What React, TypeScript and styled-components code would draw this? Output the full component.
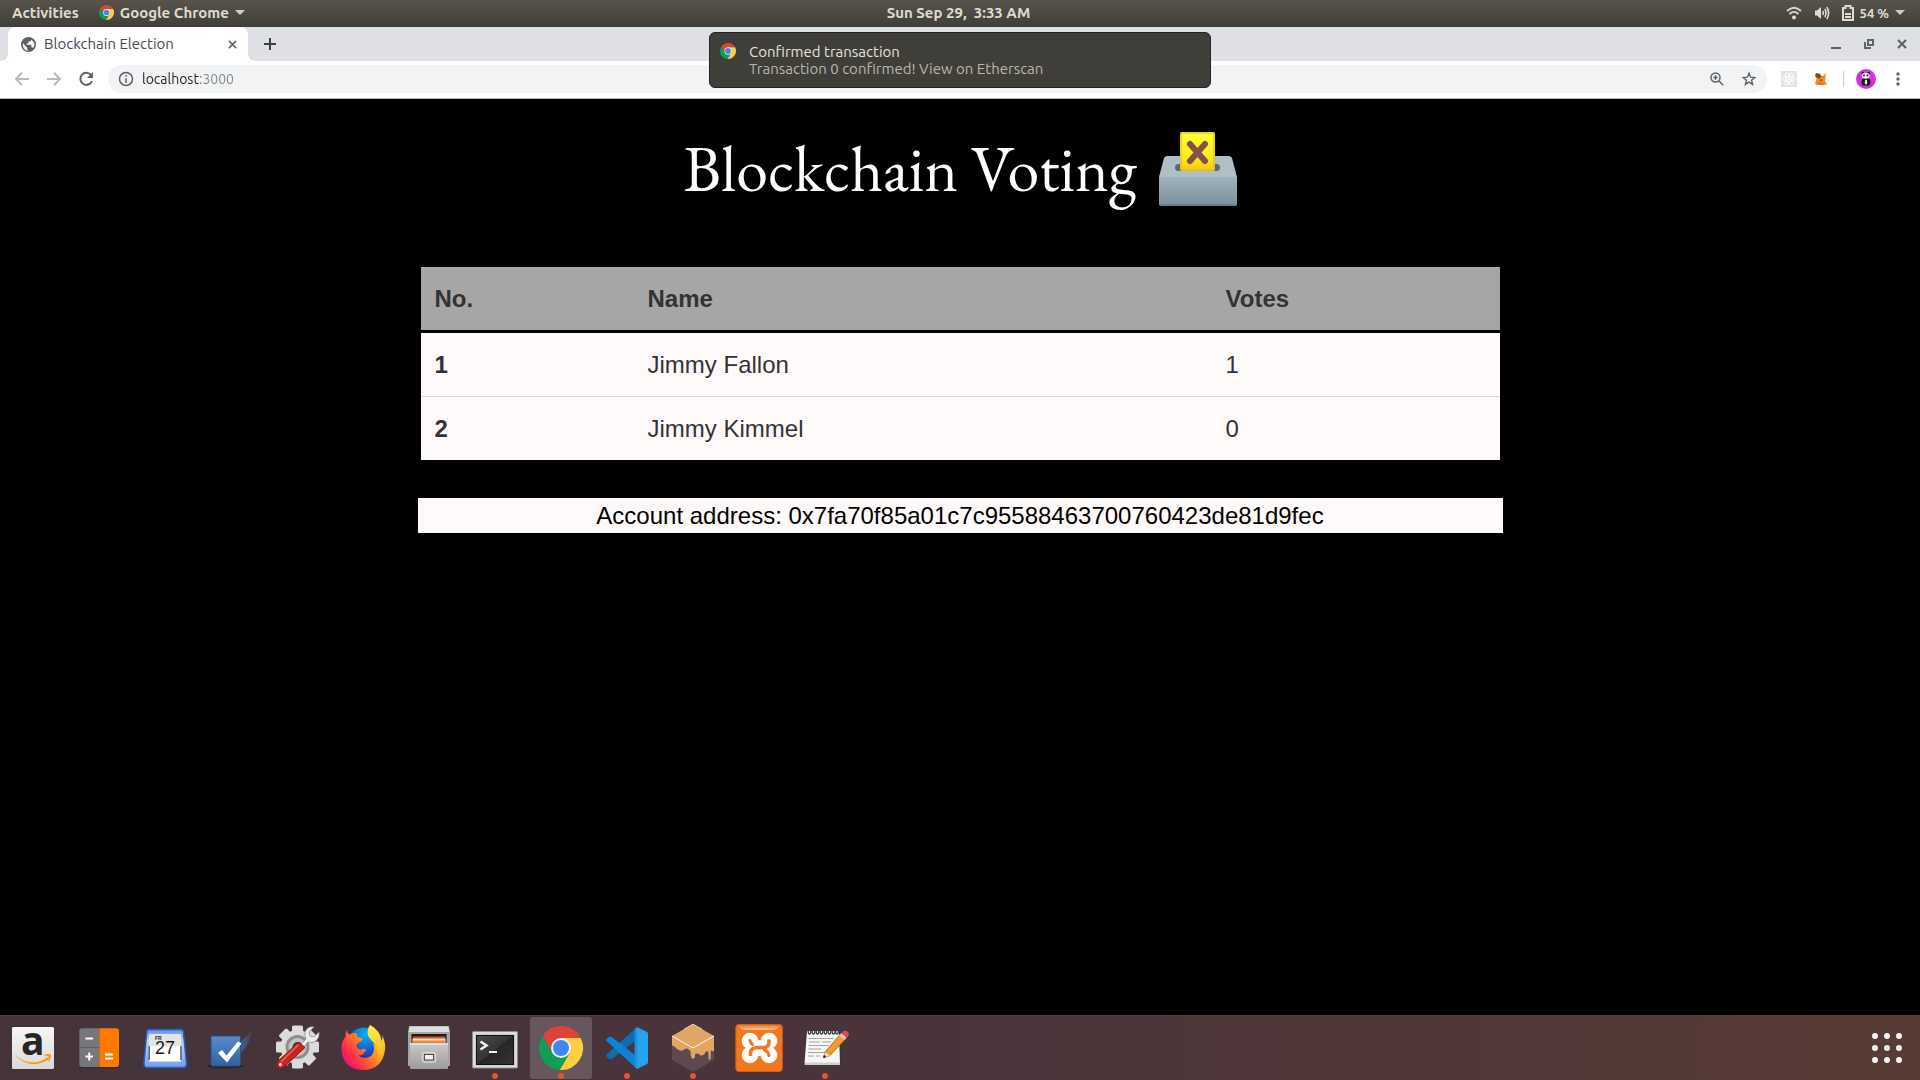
import React from "react";
import styled, { createGlobalStyle } from "styled-components";

const GlobalStyle = createGlobalStyle`
  *, *::before, *::after { box-sizing: border-box; }
  html, body, #root { height: 100%; margin: 0; }
  body { background: #000; overflow: hidden; }
  button, input { font: inherit; color: inherit; border: 0; padding: 0; margin: 0; background: none; }
  svg { display: block; flex: none; overflow: visible; }
`;

const uiFont = `"Ubuntu", "Noto Sans", "Open Sans", sans-serif`;

const Desktop = styled.div`
  min-height: 100vh;
  display: flex;
  flex-direction: column;
  font-family: ${uiFont};
`;

/* ---------- system bar ---------- */

const SystemBar = styled.header`
  height: 27px;
  flex: none;
  display: grid;
  grid-template-columns: 1fr auto 1fr;
  align-items: center;
  padding: 0 15px 2px 12px;
  background: linear-gradient(#58544c, #403e38);
  color: #dfdbd2;
  font-size: 15px;
  font-weight: 600;
`;

const BarGroup = styled.div<{ $end?: boolean; $gap: number }>`
  display: flex;
  align-items: center;
  justify-content: ${(p) => (p.$end ? "flex-end" : "flex-start")};
  gap: ${(p) => p.$gap}px;
`;

const BarButton = styled.button`
  display: flex;
  align-items: center;
  gap: 6px;
  line-height: 20px;
  white-space: pre;
`;

const BatteryText = styled.span`
  font-size: 13px;
`;

const Caret = styled.span`
  border: 5px solid transparent;
  border-top-color: #d0ccc4;
  border-bottom: 0;
`;

/* ---------- browser chrome ---------- */

const TabStrip = styled.div`
  height: 34px;
  flex: none;
  display: flex;
  align-items: stretch;
  padding: 0 2px 0 8px;
  background: #dee0e6;
  color: #5f6368;
`;

const Tab = styled.div`
  position: relative;
  width: 240px;
  display: flex;
  align-items: center;
  gap: 8px;
  padding: 0 10px 0 13px;
  border-radius: 8px 8px 0 0;
  background: #fff;
  color: #45494d;
  &::before, &::after {
    content: "";
    position: absolute;
    bottom: 0;
    width: 8px;
    height: 8px;
  }
  &::before { left: -8px; background: radial-gradient(circle at 0 0, transparent 8px, #fff 8px); }
  &::after { right: -8px; background: radial-gradient(circle at 100% 0, transparent 8px, #fff 8px); }
`;

const TabTitle = styled.span`
  flex: 1;
  font-size: 15px;
  line-height: 20px;
`;

const IconButton = styled.button<{ $w: number }>`
  width: ${(p) => p.$w}px;
  display: flex;
  align-items: center;
  justify-content: center;
`;

const WindowControls = styled.div`
  margin-left: auto;
  display: flex;
  align-items: stretch;
  gap: 1px;
`;

const Toolbar = styled.div`
  height: 38px;
  flex: none;
  display: flex;
  align-items: center;
  padding: 0 6px 1px;
  background: #fff;
  border-bottom: 1px solid #b5b8b7;
  color: #5f6368;
`;

const Omnibox = styled.label`
  flex: 1;
  height: 28px;
  margin: 0 6px;
  padding: 0 2px 0 10px;
  display: flex;
  align-items: center;
  border-radius: 14px;
  background: #f1f3f4;
`;

const Address = styled.input`
  flex: 1;
  min-width: 0;
  height: 20px;
  margin-left: 8px;
  outline: none;
  font-size: 14px;
  line-height: 20px;
  color: transparent;
  background: linear-gradient(to right, #202124 57px, #80868b 57px);
  background-clip: text;
  -webkit-background-clip: text;
`;

const Separator = styled.span`
  width: 1px;
  height: 16px;
  margin: 0 6px;
  background: #c9cbce;
`;

/* ---------- notification ---------- */

const Toast = styled.aside`
  position: absolute;
  top: 32px;
  left: 50%;
  transform: translateX(-50%);
  width: 502px;
  height: 56px;
  display: flex;
  gap: 13px;
  padding: 10px;
  border: 1px solid #24231f;
  border-radius: 6px;
  background: #403e38;
  color: #e6e3dc;
  font-size: 15px;
  line-height: 17px;
`;

const ToastText = styled.div`
  display: flex;
  flex-direction: column;
`;

const ToastBody = styled.span`
  color: #b9b6ae;
`;

/* ---------- page ---------- */

const Page = styled.main`
  flex: 1;
  display: flex;
  flex-direction: column;
  align-items: center;
  background: #000;
  font-family: "Liberation Sans", Arial, sans-serif;
  font-size: 24px;
`;

const Title = styled.h1`
  display: flex;
  align-items: center;
  gap: 22px;
  margin: 30px 0 0;
  color: #fff;
  font-family: "EB Garamond", "Liberation Serif", serif;
  font-size: 64px;
  font-weight: 400;
  line-height: 80px;
`;

const Content = styled.section`
  width: 100%;
  max-width: 1085px;
  margin-top: 58px;
  display: flex;
  flex-direction: column;
  gap: 38px;
`;

const TableFrame = styled.div`
  padding: 0 3px;
`;

const Results = styled.table`
  width: 100%;
  table-layout: fixed;
  border-collapse: separate;
  border-spacing: 0;
  color: #333;
  text-align: left;
  background: #fffafa;
`;

const Col = styled.col<{ $w?: number }>`
  width: ${(p) => (p.$w ? `${p.$w}px` : "auto")};
`;

const HeadCell = styled.th`
  height: 66px;
  padding: 0 14px;
  background: #a6a6a6;
  border-bottom: 3px solid #000;
`;

const BodyRow = styled.tr`
  line-height: 63px;
  & + & > * { border-top: 1px solid #d9d9d9; }
`;

const RowHead = styled.th`
  padding: 0 14px;
`;

const Cell = styled.td`
  padding: 0 14px;
`;

const Account = styled.p`
  margin: 0;
  background: #fffafa;
  color: #000;
  text-align: center;
  line-height: 35px;
`;

/* ---------- dock ---------- */

const Dock = styled.nav`
  height: 65px;
  flex: none;
  display: flex;
  align-items: flex-start;
  justify-content: space-between;
  padding: 1px 2px 0;
  background: linear-gradient(to right, #44343a, #4a343a 50%, #573b34);
  border-top: 1px solid #4e4044;
`;

const DockList = styled.div`
  display: flex;
  gap: 4px;
`;

const DockItem = styled.button<{ $active?: boolean; $running?: boolean }>`
  position: relative;
  width: 62px;
  height: 62px;
  display: flex;
  align-items: center;
  justify-content: center;
  border-radius: 3px;
  background: ${(p) => (p.$active ? "#67575c" : "transparent")};
  &::after {
    content: "";
    display: ${(p) => (p.$running ? "block" : "none")};
    position: absolute;
    bottom: 0;
    left: 28px;
    width: 6px;
    height: 6px;
    border-radius: 3px;
    background: #e95420;
  }
`;

/* ---------- drawings ---------- */

const ChromeLogo = ({ size }: { size: number }) => (
  <svg width={size} height={size} viewBox="2 2 44 44" aria-hidden="true">
    <path fill="#db4437" d="M24 14H43.6A22 22 0 0 0 5.54 12.03L15.34 29A10 10 0 0 1 24 14Z" />
    <path fill="#0f9d58" d="M15.34 29L5.54 12.03A22 22 0 0 0 22.86 45.97L32.66 29Z" />
    <path fill="#ffcd40" d="M32.66 29L22.86 45.97A22 22 0 0 0 43.6 14H24Z" />
    <circle cx="24" cy="24" r="10" fill="#f1f1f1" />
    <circle cx="24" cy="24" r="8" fill="#4285f4" />
  </svg>
);

const BallotBox = () => (
  <svg width="78" height="76" viewBox="0 0 78 76" role="img" aria-label="ballot box with ballot">
    <defs>
      <linearGradient id="bbFront" x2="0" y2="1"><stop stopColor="#9fb3bc" /><stop offset="1" stopColor="#78909c" /></linearGradient>
      <linearGradient id="bbPaper" x2="0" y2="1"><stop stopColor="#ffff3a" /><stop offset=".6" stopColor="#ffee20" /><stop offset="1" stopColor="#f9c80e" /></linearGradient>
    </defs>
    <path d="M5 27Q6 25 8 25H70Q72 25 73 27L78 46H0Z" fill="#b0bec5" />
    <path d="M0 46H78V73Q78 75 75 75H3Q0 75 0 73Z" fill="url(#bbFront)" />
    <path d="M1 73H77Q76 75 74 75H4Q1 75 1 73Z" fill="#5f7f8c" />
    <rect x="16" y="33" width="45" height="7" rx="3.500" fill="#5c6870" />
    <rect x="21" y="1" width="35" height="39" rx="2" fill="url(#bbPaper)" />
    <rect x="22" y="2" width="33" height="37" rx="1" fill="none" stroke="#c9b81c" strokeWidth="1.5" opacity=".7" />
    <path d="M31 13L46 30M46 13L31 30" stroke="#85524a" strokeWidth="6" strokeLinecap="round" />
  </svg>
);

const Globe = () => (
  <svg width="15" height="15" viewBox="0 0 24 24" aria-hidden="true">
    <circle cx="12" cy="12" r="12" fill="#5a5e66" />
    <path fill="#fff" d="M3 10l7 7v2q0 2 2 2v1C6 22 2.500 17 3 10zM19.500 18c-.4-1-1-1.700-2-1.700h-1v-3q0-1-1-1H9v-2h2q1 0 1-1v-2h2q2 0 2-2v-1c6 3 7 9 3.500 13z" />
  </svg>
);

const stroke = { fill: "none", stroke: "currentColor", strokeWidth: 2 } as const;

const CrossIcon = ({ size = 9 }: { size?: number }) => (
  <svg width={size} height={size} viewBox="0 0 10 10" {...stroke} strokeWidth={size > 9 ? 2.2 : 1.7} stroke="#5f6368" aria-hidden="true"><path d="M1 1L9 9M9 1L1 9" /></svg>
);
const PlusIcon = () => (
  <svg width="12" height="12" viewBox="0 0 12 12" {...stroke} stroke="#3c4043" aria-hidden="true"><path d="M6 0V12M0 6H12" /></svg>
);
const ArrowIcon = ({ flip }: { flip?: boolean }) => (
  <svg width="14" height="14" viewBox="0 0 14 14" {...stroke} stroke="#b9bbbe" aria-hidden="true">
    <path d={flip ? "M0 7H13M7 .8L13 7L7 13.200" : "M14 7H1M7 .8L1 7L7 13.200"} />
  </svg>
);
const ReloadIcon = () => (
  <svg width="16" height="16" viewBox="0 0 16 16" {...stroke} aria-hidden="true">
    <path d="M13 4A6 6 0 1 0 14 10" /><path d="M15 1V7H9Z" fill="currentColor" stroke="none" />
  </svg>
);
const InfoIcon = () => (
  <svg width="16" height="16" viewBox="0 0 16 16" {...stroke} strokeWidth="1.500" aria-hidden="true">
    <circle cx="8" cy="8" r="6.500" /><path d="M8 7.200V12M8 4V5.600" />
  </svg>
);
const ZoomIcon = () => (
  <svg width="14" height="14" viewBox="0 0 14 14" {...stroke} strokeWidth="1.500" aria-hidden="true">
    <circle cx="5.500" cy="5.500" r="4.500" /><path d="M9 9L13.200 13.200M5.500 3.300V7.700M3.300 5.500H7.700" />
  </svg>
);
const StarIcon = () => (
  <svg width="14" height="14" viewBox="0 0 14 14" {...stroke} strokeWidth="1.400" aria-hidden="true">
    <path d="M7 1.300L8.600 5.200L12.800 5.500L9.600 8.200L10.600 12.400L7 10.100L3.400 12.400L4.400 8.200L1.200 5.500L5.400 5.200Z" />
  </svg>
);
const ReactExtension = () => (
  <svg width="16" height="16" viewBox="0 0 16 16" aria-hidden="true">
    <rect width="16" height="16" fill="#e4e4e4" />
    <g fill="none" stroke="#fff" strokeWidth=".9">
      <ellipse cx="8" cy="8" rx="6.500" ry="2.500" />
      <ellipse cx="8" cy="8" rx="6.500" ry="2.500" transform="rotate(60 8 8)" />
      <ellipse cx="8" cy="8" rx="6.500" ry="2.500" transform="rotate(120 8 8)" />
    </g>
    <circle cx="8" cy="8" r="1.300" fill="#fff" />
  </svg>
);
const FoxExtension = () => (
  <svg width="12" height="12" viewBox="0 0 12 12" aria-hidden="true">
    <path fill="#f08a1d" d="M1 1L4 3H8L10.500 0L10.500 5L10 8L12 11.500L9 12L2 12L0 11L1.500 6Z" />
    <path fill="#8a4a1e" d="M1 0L5 .8L6.500 3.500L4.500 5.500L2 5L0 3Z" />
    <path fill="#e2710f" d="M3 10L6 9L8 11L6 12Z" />
    <path fill="#3b2a20" d="M5.500 6.500H7V7.700H5.500Z" />
  </svg>
);
const Avatar = () => (
  <svg width="20" height="20" viewBox="0 0 20 20" aria-hidden="true">
    <circle cx="10" cy="10" r="10" fill="#cf34e0" />
    <circle cx="6.800" cy="4.500" r="1.400" fill="#111" /><circle cx="12.500" cy="4.500" r="1.400" fill="#111" />
    <path d="M6.500 10Q10 8 13.500 10Q15.500 13 13.500 16.500H6.500Q4.500 13 6.500 10Z" fill="#111" />
    <ellipse cx="9.700" cy="6.700" rx="4" ry="3" fill="#f2f2f2" />
    <ellipse cx="8" cy="6.500" rx=".9" ry="1" fill="#111" /><ellipse cx="11.500" cy="6.500" rx=".9" ry="1" fill="#111" />
    <ellipse cx="10" cy="13" rx="1.300" ry="2.600" fill="#f2f2f2" />
  </svg>
);
const MenuDots = () => (
  <svg width="4" height="14" viewBox="0 0 4 14" fill="#5f6368" aria-hidden="true">
    <circle cx="2" cy="2" r="1.700" /><circle cx="2" cy="7" r="1.700" /><circle cx="2" cy="12" r="1.700" />
  </svg>
);
const MinimizeIcon = () => (
  <svg width="10" height="10" viewBox="0 0 10 10" aria-hidden="true"><path d="M0 8H10V10H0Z" fill="#5f6368" /></svg>
);
const RestoreIcon = () => (
  <svg width="10" height="10" viewBox="0 0 10 10" {...stroke} aria-hidden="true">
    <path d="M4 1H9V6H4ZM1 3V9H7" />
  </svg>
);
const WifiIcon = () => (
  <svg width="16" height="14" viewBox="0 0 16 14" {...stroke} aria-hidden="true">
    <path d="M1 5Q8 -1.500 15 5M3.500 8Q8 3.800 12.500 8" strokeWidth="1.800" /><circle cx="8" cy="11.500" r="2" fill="currentColor" stroke="none" />
  </svg>
);
const VolumeIcon = () => (
  <svg width="16" height="14" viewBox="0 0 16 14" {...stroke} strokeWidth="1.600" aria-hidden="true">
    <path d="M1 4.500H3L7 1V13L3 9.500H1Z" fill="currentColor" stroke="none" />
    <path d="M8.700 5Q10 7 8.700 9M10.800 3Q13.200 7 10.800 11M12.800 1Q16.500 7 12.800 13" />
  </svg>
);
const BatteryIcon = () => (
  <svg width="12" height="16" viewBox="0 0 12 16" {...stroke} aria-hidden="true">
    <path d="M1 3H3.500V1H8.500V3H11V15H1Z" /><path d="M3 9H9M3 12H9" />
  </svg>
);

const Art = ({ children }: { children: React.ReactNode }) => (
  <svg width="48" height="48" viewBox="0 0 48 48" aria-hidden="true">{children}</svg>
);

const AmazonArt = () => (
  <Art>
    <defs><linearGradient id="amz" x2="0" y2="1"><stop stopColor="#f7f7f7" /><stop offset="1" stopColor="#d9d9d9" /></linearGradient></defs>
    <rect x="3" y="3" width="42" height="42" rx="1.500" fill="url(#amz)" />
    <text x="12" y="31" fontFamily="Open Sans, sans-serif" fontSize="39" fontWeight="700" fill="#262626">a</text>
    <path d="M6 31Q22 45 39 33L40.500 35Q21 47 6 31Z" fill="#f90" />
    <path d="M34.500 31.200Q39 29 42 30.600Q42.500 34.500 39 38.500Q40.300 34.500 39.800 32.600Q37.500 31.300 34.500 31.200Z" fill="#f90" />
  </Art>
);
const CalculatorArt = () => (
  <Art>
    <rect x="4" y="5" width="40" height="39.500" rx="3" fill="#3a2c30" />
    <path d="M7 4.300H24.300V43H7Q4.300 43 4.300 40V7Q4.300 4.300 7 4.300Z" fill="#77767b" />
    <path d="M24.300 4.300H41Q44 4.300 44 7V40Q44 43 41 43H24.300Z" fill="#ff7800" />
    <path d="M4.300 23.500H24.300" stroke="#5e5c64" strokeWidth="1" />
    <path d="M10.500 14.500H18M10.500 32.500H18M14.250 28.500V36.500M30 30.500H38M30 34.500H38" stroke="#fff" strokeWidth="2" />
  </Art>
);
const CalendarArt = () => (
  <Art>
    <defs><linearGradient id="cal" x2="0" y2="1"><stop stopColor="#5b8fe8" /><stop offset=".3" stopColor="#bcd3fb" /><stop offset="1" stopColor="#6f9ff2" /></linearGradient></defs>
    <path d="M8 5.500H40Q42 5.500 42.300 7.500L45.500 39Q45.800 43.500 42 43.500H6.500Q2.500 43.500 3 39L5.800 7.500Q6 5.500 8 5.500Z" fill="url(#cal)" stroke="#2a5cb4" strokeWidth="1.500" />
    <path d="M8.500 10H39.500L40 37.500H8Z" fill="#fff" />
    <path d="M8.400 10H39.600L39.800 22H8.200Z" fill="#e4e4e4" />
    <path d="M8.200 36V22M39.900 36V22" stroke="#2b2b2b" strokeWidth="1" />
    <text x="14" y="15.500" fontFamily="Liberation Sans, sans-serif" fontSize="5" fontWeight="700" fill="#222">FR</text>
    <text x="14" y="30" fontFamily="Liberation Sans, sans-serif" fontSize="18" fill="#1a1a1a">27</text>
  </Art>
);
const TodoArt = () => (
  <Art>
    <defs>
      <linearGradient id="todo" x2="0" y2="1"><stop stopColor="#5b8cc6" /><stop offset="1" stopColor="#2f62a6" /></linearGradient>
      <linearGradient id="streak" x1="0" y1="1" x2="1" y2="0"><stop stopColor="#3a6cb0" /><stop offset="1" stopColor="#3a6cb0" stopOpacity=".1" /></linearGradient>
    </defs>
    <ellipse cx="18.500" cy="42" rx="18" ry="2.500" fill="#281d21" opacity=".7" />
    <path d="M30 22L46 5L41 20L33 30Z" fill="url(#streak)" />
    <rect x="4" y="12" width="29.500" height="30" rx="1.500" fill="url(#todo)" stroke="#22508f" />
    <path d="M11 29L15 26L19.500 31.500L31 17.500L34.500 19.500L20 38.500Z" fill="#fff" />
  </Art>
);
const SettingsArt = () => (
  <Art>
    <g fill="#dcdcda">
      {[0, 45, 90, 135].map((a) => (
        <rect key={a} x="19" y="1.500" width="11" height="43" rx="1.500" transform={`rotate(${a} 24.500 23)`} />
      ))}
      <circle cx="24.500" cy="23" r="17" />
    </g>
    <circle cx="24.500" cy="23" r="12" fill="#8d8f8d" />
    <circle cx="24.500" cy="23" r="9" fill="#c4c4c2" />
    <circle cx="24.500" cy="23" r="5" fill="#4a3a3e" />
    <path d="M27 21L33 15Q30 8 35 4Q38 2 41 3L36 8L37 12L41 13L46 8Q47 13 43 17Q39 20 35 18L30 24Z" fill="#ededeb" stroke="#8a8a88" strokeWidth=".8" />
    <path d="M26 18L32 23.500L11 43Q7 46 4.500 42.500Q2.800 40 5 37Z" fill="#cc2222" stroke="#8e1414" />
    <path d="M25.500 20.500L8 38" stroke="#ef6a5e" strokeWidth="1.500" />
    <circle cx="7.500" cy="40.500" r="1.500" fill="#fff" />
  </Art>
);
const FirefoxArt = () => (
  <Art>
    <defs>
      <radialGradient id="ffBlue" cx=".55" cy=".2" r=".8"><stop stopColor="#00b7ee" /><stop offset=".5" stopColor="#1466d6" /><stop offset="1" stopColor="#321a8c" /></radialGradient>
      <linearGradient id="ffBody" x1="1" y1="0" x2="0" y2=".8"><stop stopColor="#fff44f" /><stop offset=".35" stopColor="#ffb41f" /><stop offset=".6" stopColor="#ff6b2b" /><stop offset=".85" stopColor="#ff2050" /><stop offset="1" stopColor="#e0148c" /></linearGradient>
      <linearGradient id="ffTail" x2="0" y2="1"><stop stopColor="#fff04a" /><stop offset="1" stopColor="#ffb01f" /></linearGradient>
    </defs>
    <circle cx="25" cy="21" r="17.500" fill="url(#ffBlue)" />
    <path d="M8 6Q8 9 10.500 10.500Q14 8 18 9.500Q17.500 12 19 13.500Q23 13 24 15Q23 17.500 20 18.500Q17 20 17.500 22Q19 26 22 25.500Q25 24 27 26Q24 32 19 31.500Q25 36 32 32Q37 27 34 19Q38 21 38 25Q38 12 32 10Q30 4 31 1Q42 7 42.500 17Q44 14 43 11Q47 19 46 26Q43 46 24 46Q4 45 2.500 26Q2 17 6.500 13Q6 9 8 6Z" fill="url(#ffBody)" />
    <path d="M31 1Q41 7 41.500 17Q46 28 38 36Q40 28 36 20Q29 14 28.500 9Q28.500 4 31 1Z" fill="url(#ffTail)" />
  </Art>
);
const FilesArt = () => (
  <Art>
    <defs><linearGradient id="files" x2="0" y2="1"><stop stopColor="#c9c9c7" /><stop offset="1" stopColor="#9b9b99" /></linearGradient></defs>
    <path d="M4 2H44L45 9V42H3V9Z" fill="#a5a5a3" />
    <path d="M5 2.500H43L44.500 8H3.500Z" fill="#dededc" />
    <rect x="6.500" y="10" width="35" height="12" fill="#1f1c1a" />
    <path d="M8 12.500H40V20H8Z" fill="#d4581c" /><path d="M7.500 14.500H40.500V21H7.500Z" fill="#f3e2cf" /><path d="M7.500 16.500H40.500V22H7.500Z" fill="#e8873d" />
    <rect x="5" y="19.500" width="38" height="25.500" rx="1" fill="url(#files)" />
    <path d="M5 20H43" stroke="#e6e6e4" strokeWidth="1.500" />
    <rect x="17.500" y="28.500" width="13" height="9.500" rx="2" fill="none" stroke="#d4d4d2" strokeWidth="1.500" />
    <rect x="19.500" y="30.500" width="9" height="5.500" fill="#f1f1ef" stroke="#4b4b49" />
  </Art>
);
const TerminalArt = () => (
  <Art>
    <defs><linearGradient id="term" x2="1" y2="1"><stop stopColor="#4c4c4a" /><stop offset=".5" stopColor="#343433" /><stop offset=".5" stopColor="#262625" /><stop offset="1" stopColor="#333" /></linearGradient></defs>
    <rect x="1.500" y="7.500" width="45" height="36.500" rx="1" fill="#dcdcda" stroke="#8b8b89" />
    <rect x="4.500" y="10.500" width="39" height="31" fill="#b8b8b6" />
    <rect x="5.500" y="11.500" width="37" height="29" fill="url(#term)" stroke="#111" />
    <path d="M9.500 17.500L15.500 21.500L9.500 25.500" fill="none" stroke="#f2f2f0" strokeWidth="2.500" />
    <path d="M18 28H26" stroke="#f2f2f0" strokeWidth="2" />
  </Art>
);
const CodeArt = () => (
  <Art>
    <path d="M34 3L3.500 30.500Q2.500 31.600 3.500 32.600L6.500 35Q7.600 35.800 8.800 35L34 15.500Z" fill="#0f6cae" />
    <path d="M34 45L3.500 17Q2.500 16 3.500 15L6.500 12.700Q7.600 12 8.800 12.900L34 32.500Z" fill="#0d83d1" />
    <path d="M34 3L44 8Q45 8.600 45 10V38Q45 39.400 44 40L34 45Z" fill="#27a3ee" />
    <path d="M31.500 5.300L34 3V45L31.500 42.700Z" fill="#1a90dc" />
  </Art>
);
const GanacheArt = () => (
  <Art>
    <path d="M3 13L24 25L45 13V36L24 48L3 36Z" fill="#5d494f" />
    <path d="M24 0L45 12V27Q43 28 42 26L41.500 35Q40.500 36.500 39.500 35V28Q37 26 35.500 30Q32 33 30 30Q27 29 26 30.500V33.500Q24.500 35.500 22.500 34Q21.500 32 21.500 27Q17 23 15.500 25.500Q12 28 8 25Q6 22 3 21.500V12Z" fill="#e2a664" />
    <path d="M3 12L22.500 23.200Q24 24 25.500 23.200L45 12" fill="none" stroke="#fff3e2" strokeWidth="1" />
    <path d="M15 5.200L23 .7Q24 .3 25 .7L33 5.200" fill="none" stroke="#f7e0c3" strokeWidth=".8" />
  </Art>
);
const XamppArt = () => (
  <Art>
    <defs><linearGradient id="xaShine" x2="0" y2="1"><stop stopColor="#fff" stopOpacity=".15" /><stop offset="1" stopColor="#fff" stopOpacity=".55" /></linearGradient></defs>
    <rect x=".8" y=".5" width="46.500" height="47" rx="3" fill="#f5761b" stroke="#c9601b" />
    <path d="M4 2H44Q43 6 37 6H11Q5 6 4 2Z" fill="url(#xaShine)" />
    <g fill="#fff">
      <circle cx="15" cy="17" r="8.300" /><circle cx="34" cy="17" r="8.300" />
      <circle cx="15" cy="31" r="8.300" /><circle cx="34" cy="31" r="8.300" />
      <rect x="11" y="16" width="27" height="16" />
    </g>
    <g fill="none" stroke="#f5761b" strokeLinecap="round">
      <path d="M34 15.500V18Q34 23.500 29 23.500H22Q15.500 24 15.500 29V32" strokeWidth="3.600" strokeLinecap="butt" />
      <path d="M15 16.500Q15.500 19 17.500 20.500" strokeWidth="3" />
      <path d="M29.500 26Q33.500 27.500 34 31.500" strokeWidth="3" />
    </g>
  </Art>
);
const EditorArt = () => (
  <Art>
    <path d="M6 8H39L39.500 41H3.500Z" fill="#2c2125" opacity=".6" />
    <path d="M6 7H38L39 39.500H3.500Z" fill="#f6f6f4" />
    <path d="M4 38.500H39V41H3.500Z" fill="#cfcfcd" />
    <g fill="none" stroke="#3a3a38" strokeWidth="1.300">
      {[8.5, 12.5, 16.5, 20.5, 24.5, 28.5, 32.5, 36].map((x) => (
        <ellipse key={x} cx={x} cy="7.500" rx="1.300" ry="2.500" />
      ))}
    </g>
    <path d="M8 14.500H32M8 18H19M21 18H30M7.500 21.500H28M7.500 25H20M7 28.500H24M7 32H13M15 32H19" stroke="#a3a3a1" strokeWidth="1.200" />
    <path d="M24 28L40 9.500L45.500 14L29 31.500L22.500 34Z" fill="#f19a2e" stroke="#9c5c14" strokeWidth=".8" />
    <path d="M24 28L29 31.500L22.500 34Z" fill="#f4dcb0" /><circle cx="23.500" cy="32.500" r="1.200" fill="#222" />
    <path d="M38 11.500L40.500 9L45.500 13.500L43.500 16Z" fill="#c9c9c7" />
    <path d="M40.500 9Q43 5.500 46.500 7.500Q49.500 10 46 13.800Z" fill="#e0485a" />
  </Art>
);
const AppGrid = () => (
  <svg width="30" height="30" viewBox="0 0 30 30" fill="#f3f1f0" aria-hidden="true">
    {[3, 15, 27].map((y) => [3, 15, 27].map((x) => <circle key={`${x}-${y}`} cx={x} cy={y} r="3" />))}
  </svg>
);

const apps = [
  { name: "Amazon", art: <AmazonArt /> },
  { name: "Calculator", art: <CalculatorArt /> },
  { name: "Calendar", art: <CalendarArt /> },
  { name: "To Do", art: <TodoArt /> },
  { name: "System Tools", art: <SettingsArt /> },
  { name: "Firefox", art: <FirefoxArt /> },
  { name: "Files", art: <FilesArt /> },
  { name: "Terminal", art: <TerminalArt />, running: true },
  { name: "Google Chrome", art: <ChromeLogo size={44} />, running: true, active: true },
  { name: "Visual Studio Code", art: <CodeArt />, running: true },
  { name: "Ganache", art: <GanacheArt />, running: true },
  { name: "XAMPP", art: <XamppArt /> },
  { name: "Text Editor", art: <EditorArt />, running: true },
];

const candidates = [
  { id: 1, name: "Jimmy Fallon", votes: 1 },
  { id: 2, name: "Jimmy Kimmel", votes: 0 },
];

export default function App() {
  return (
    <Desktop>
      <GlobalStyle />
      <SystemBar>
        <BarGroup $gap={20}>
          <BarButton>Activities</BarButton>
          <BarButton><ChromeLogo size={15} />Google Chrome<Caret /></BarButton>
        </BarGroup>
        <BarButton>{"Sun Sep 29,  3:33 AM"}</BarButton>
        <BarGroup $gap={12} $end>
          <WifiIcon />
          <VolumeIcon />
          <BarButton aria-label="Battery and system menu">
            <BatteryIcon /><BatteryText>54 %</BatteryText><Caret />
          </BarButton>
        </BarGroup>
      </SystemBar>

      <TabStrip>
        <Tab>
          <Globe />
          <TabTitle>Blockchain Election</TabTitle>
          <IconButton $w={12} aria-label="Close tab"><CrossIcon /></IconButton>
        </Tab>
        <IconButton $w={44} aria-label="New tab"><PlusIcon /></IconButton>
        <WindowControls>
          <IconButton $w={32} aria-label="Minimize"><MinimizeIcon /></IconButton>
          <IconButton $w={32} aria-label="Restore"><RestoreIcon /></IconButton>
          <IconButton $w={32} aria-label="Close"><CrossIcon size={10} /></IconButton>
        </WindowControls>
      </TabStrip>

      <Toolbar>
        <IconButton $w={32} aria-label="Back"><ArrowIcon /></IconButton>
        <IconButton $w={32} aria-label="Forward"><ArrowIcon flip /></IconButton>
        <IconButton $w={32} aria-label="Reload"><ReloadIcon /></IconButton>
        <Omnibox>
          <InfoIcon />
          <Address type="text" aria-label="Address" defaultValue="localhost:3000" />
          <IconButton $w={32} aria-label="Zoom"><ZoomIcon /></IconButton>
          <IconButton $w={32} aria-label="Bookmark"><StarIcon /></IconButton>
        </Omnibox>
        <IconButton $w={32} aria-label="React Developer Tools"><ReactExtension /></IconButton>
        <IconButton $w={32} aria-label="MetaMask"><FoxExtension /></IconButton>
        <Separator />
        <IconButton $w={32} aria-label="Profile"><Avatar /></IconButton>
        <IconButton $w={32} aria-label="Menu"><MenuDots /></IconButton>
      </Toolbar>

      <Toast role="status">
        <ChromeLogo size={16} />
        <ToastText>
          <span>Confirmed transaction</span>
          <ToastBody>Transaction 0 confirmed! View on Etherscan</ToastBody>
        </ToastText>
      </Toast>

      <Page>
        <Title>Blockchain Voting <BallotBox /></Title>
        <Content>
          <TableFrame>
            <Results>
              <colgroup><Col $w={213} /><Col /><Col $w={288} /></colgroup>
              <thead>
                <tr><HeadCell>No.</HeadCell><HeadCell>Name</HeadCell><HeadCell>Votes</HeadCell></tr>
              </thead>
              <tbody>
                {candidates.map((c) => (
                  <BodyRow key={c.id}>
                    <RowHead scope="row">{c.id}</RowHead>
                    <Cell>{c.name}</Cell>
                    <Cell>{c.votes}</Cell>
                  </BodyRow>
                ))}
              </tbody>
            </Results>
          </TableFrame>
          <Account>Account address: 0x7fa70f85a01c7c95588463700760423de81d9fec</Account>
        </Content>
      </Page>

      <Dock>
        <DockList>
          {apps.map((a) => (
            <DockItem key={a.name} aria-label={a.name} $active={a.active} $running={a.running}>{a.art}</DockItem>
          ))}
        </DockList>
        <DockItem aria-label="Show Applications"><AppGrid /></DockItem>
      </Dock>
    </Desktop>
  );
}
